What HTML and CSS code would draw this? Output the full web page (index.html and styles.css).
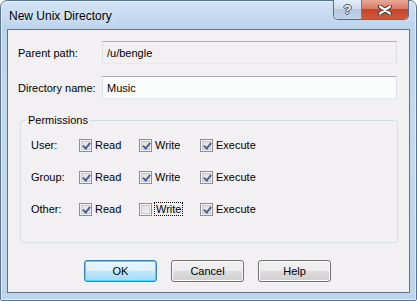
FILE: index.html
```html
<!DOCTYPE html>
<html lang="en">

<head>
	<meta charset="UTF-8">
	<meta name="viewport" content="width=device-width, initial-scale=1.0">
	<title>New Unix Directory</title>
	<link rel="stylesheet" href="styles.css">
</head>

<body>
	<div class="window">
		<div class="titlebar">
			<span class="title">New Unix Directory</span>
			<div class="caption-buttons">
				<div class="cap-help">?</div>
				<div class="cap-close">
					<svg width="14" height="10" viewBox="0 0 14 10">
						<path d="M2 1.5 L12 8.5 M12 1.5 L2 8.5" stroke="#3a3a3a" stroke-width="4.2" stroke-linecap="round" fill="none" />
						<path d="M2 1.5 L12 8.5 M12 1.5 L2 8.5" stroke="#ffffff" stroke-width="2.2" stroke-linecap="round" fill="none" />
					</svg>
				</div>
			</div>
		</div>

		<div class="client">
			<div class="fields">
				<label class="field-label">Parent path:</label>
				<div class="textbox readonly">/u/bengle</div>
				<label class="field-label">Directory name:</label>
				<div class="textbox">Music</div>
			</div>

			<div class="group">
				<span class="group-title">Permissions</span>
				<div class="perm-grid">
					<span class="row-label">User:</span>
					<span class="check on"><span class="box"></span>Read</span>
					<span class="check on"><span class="box"></span>Write</span>
					<span class="check on"><span class="box"></span>Execute</span>

					<span class="row-label">Group:</span>
					<span class="check on"><span class="box"></span>Read</span>
					<span class="check on"><span class="box"></span>Write</span>
					<span class="check on"><span class="box"></span>Execute</span>

					<span class="row-label">Other:</span>
					<span class="check on"><span class="box"></span>Read</span>
					<span class="check"><span class="box"></span><span class="focus">Write</span></span>
					<span class="check on"><span class="box"></span>Execute</span>
				</div>
			</div>

			<div class="buttons">
				<button class="btn default">OK</button>
				<button class="btn">Cancel</button>
				<button class="btn">Help</button>
			</div>
		</div>
	</div>
</body>
</html>
```

FILE: styles.css
```css
body {
	margin: 0;
	padding: 0;
	background-color: #ffffff;
	font-family: "Liberation Sans", Arial, sans-serif;
	font-size: 11px;
	color: #000000;
}

.window {
	width: 417px;
	height: 301px;
	box-sizing: border-box;
	border: 1px solid #5a7596;
	border-radius: 7px 7px 2px 2px;
	background: linear-gradient(to bottom, #d3e3f4 0px, #bcd3ec 28px, #c4d9ef 120px, #bdd4ec 301px);
	box-shadow: inset 0 0 0 1px rgba(255, 255, 255, 0.55);
	display: flex;
	flex-direction: column;
}

.titlebar {
	height: 28px;
	display: flex;
	align-items: flex-start;
	padding-left: 8px;
}

.title {
	margin-top: 7px;
	font-family: "Liberation Sans", Arial, sans-serif;
	font-size: 12px;
	line-height: 16px;
	color: #000000;
	text-shadow: 0 0 6px rgba(255, 255, 255, 0.9);
}

.caption-buttons {
	display: flex;
	margin-left: auto;
	margin-right: 7px;
	margin-top: -1px;
	height: 19px;
	border: 1px solid #5b6d83;
	border-top: none;
	border-radius: 0 0 5px 5px;
	overflow: hidden;
}

.cap-help {
	width: 27px;
	display: flex;
	align-items: center;
	justify-content: center;
	background: linear-gradient(to bottom, #e4edf7 0%, #cedcec 45%, #b3c8df 50%, #c0d5ea 100%);
	border-right: 1px solid #6c7f96;
	font-family: "Liberation Sans", sans-serif;
	font-weight: bold;
	font-size: 13px;
	color: #ffffff;
	text-shadow: 1px 0 0 #3b4a5c, -1px 0 0 #3b4a5c, 0 1px 0 #3b4a5c, 0 -1px 0 #3b4a5c;
}

.cap-close {
	width: 46px;
	display: flex;
	align-items: center;
	justify-content: center;
	background: linear-gradient(to bottom, #e9a999 0%, #dc7a62 45%, #c7432a 50%, #d15a3c 100%);
}

.client {
	flex: 1;
	margin: 0 6px 7px 6px;
	border: 1px solid #5f7289;
	background-color: #f2f0f3;
	padding: 11px 12px 10px 10px;
	display: flex;
	flex-direction: column;
}

.fields {
	display: grid;
	grid-template-columns: 84px 1fr;
	grid-auto-rows: 23px;
	row-gap: 12px;
	align-items: center;
}

.textbox {
	height: 23px;
	box-sizing: border-box;
	border: 1px solid #dbdfe6;
	border-top-color: #abadb3;
	border-bottom-color: #e3e9ef;
	background-color: #fbfdfd;
	padding: 0 4px;
	display: flex;
	align-items: center;
}

.textbox.readonly {
	background-color: #f2f0f3;
}

.group {
	position: relative;
	margin: 21px -1px 0 2px;
	height: 123px;
	box-sizing: border-box;
	border: 1px solid #d5dfe5;
	border-radius: 3px;
	padding: 16px 10px 0 10px;
}

.group-title {
	position: absolute;
	top: -8px;
	left: 5px;
	padding: 0 2px;
	background-color: #f2f0f3;
	line-height: 15px;
}

.perm-grid {
	display: grid;
	grid-template-columns: 48px 60px 61px auto;
	grid-auto-rows: 16px;
	row-gap: 16px;
	align-items: center;
}

.check {
	display: flex;
	align-items: center;
	gap: 3px;
}

.check .box {
	width: 13px;
	height: 13px;
	box-sizing: border-box;
	border: 1px solid #8f8f8f;
	background: linear-gradient(135deg, #d8d8d8 0%, #f7f7f7 100%);
	box-shadow: inset 0 0 0 1px #f4f4f4, inset 0 0 0 2px #c9c9c9;
	position: relative;
}

.check.on .box::after {
	content: "";
	position: absolute;
	left: 4px;
	top: 1px;
	width: 3px;
	height: 6px;
	border: solid #4d6395;
	border-width: 0 2px 2px 0;
	transform: rotate(38deg);
}

.focus {
	outline: 1px dotted #000000;
	outline-offset: 0;
	padding: 0 1px;
}

.buttons {
	margin-top: 17px;
	display: flex;
	justify-content: center;
	gap: 14px;
}

.btn {
	width: 73px;
	height: 22px;
	box-sizing: border-box;
	border: 1px solid #707070;
	border-radius: 3px;
	background: linear-gradient(to bottom, #f2f2f2 0%, #ebebeb 50%, #dddddd 50%, #cfcfcf 100%);
	box-shadow: inset 0 0 0 1px #fcfcfc;
	font-family: "Liberation Sans", Arial, sans-serif;
	font-size: 11px;
	color: #000000;
	padding: 0;
}

.btn.default {
	border-color: #3c7fb1;
	background: linear-gradient(to bottom, #eaf6fd 0%, #d9f0fc 50%, #bee6fd 50%, #a7d9f5 100%);
	box-shadow: inset 0 0 0 1px #48d8fb;
}
```
